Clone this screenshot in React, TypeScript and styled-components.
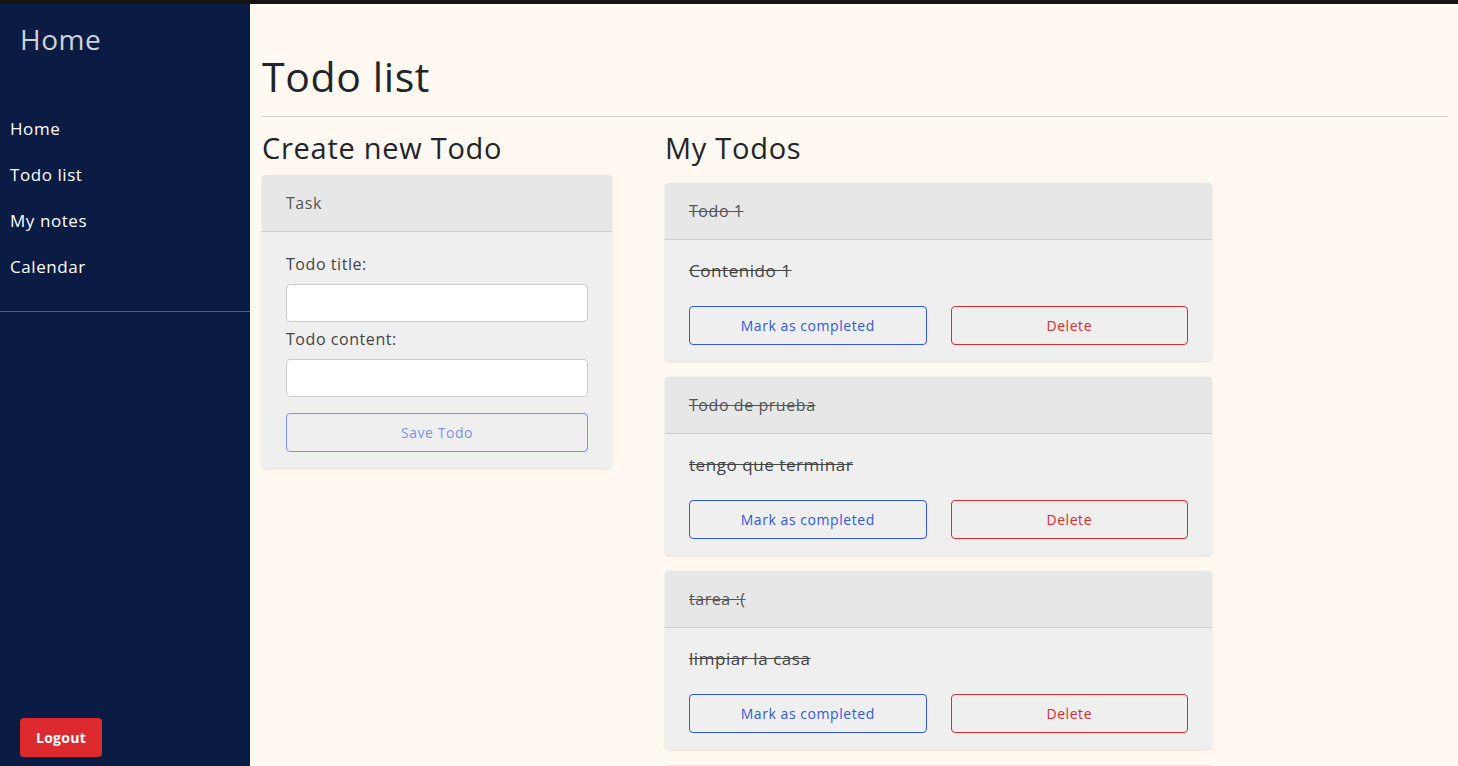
import React from "react";
import styled, { createGlobalStyle } from "styled-components";

const GlobalStyle = createGlobalStyle`
  html, body { margin: 0; padding: 0; }
  body {
    background: #fff9f1;
    font-family: "Open Sans", "Noto Sans", "Liberation Sans", sans-serif;
    color: #212529;
    letter-spacing: 0.035em;
  }
  * { box-sizing: border-box; }
`;

const Page = styled.div`
  display: flex;
  height: 766px;
  border-top: 4px solid #171310;
  overflow: hidden;
`;

const Sidebar = styled.aside`
  width: 250px;
  flex-shrink: 0;
  background: #0a1c43;
  display: flex;
  flex-direction: column;
`;

const Brand = styled.div`
  padding: 17px 20px 0;
  font-size: 28px;
  line-height: 36px;
  color: #cdd1da;
  height: 102px;
  letter-spacing: 0.02em;
`;

const Nav = styled.nav`
  display: flex;
  flex-direction: column;
  padding-bottom: 21px;
  border-bottom: 1px solid #4b6382;
`;

const NavItem = styled.a`
  display: block;
  padding: 10px 10px;
  height: 46px;
  font-size: 17px;
  line-height: 26px;
  color: #ffffff;
  text-decoration: none;
`;

const SidebarSpacer = styled.div`
  flex: 1;
`;

const LogoutButton = styled.button`
  align-self: flex-start;
  margin: 0 0 9px 20px;
  width: 82px;
  height: 39px;
  border: none;
  border-radius: 4px;
  background: #dc2a2f;
  color: #fff;
  font-family: inherit;
  font-weight: 700;
  font-size: 14px;
  letter-spacing: 0.02em;
`;

const Main = styled.main`
  flex: 1;
  padding: 0 10px 0 12px;
`;

const Title = styled.h1`
  margin: 48px 0 0;
  font-size: 41px;
  font-weight: 400;
  line-height: 48px;
  padding-bottom: 16px;
  border-bottom: 1px solid #cfcfcf;
  letter-spacing: 0.015em;
`;

const Columns = styled.div`
  display: flex;
  gap: 53px;
  padding-top: 14px;
`;

const Column = styled.section<{ $width: number }>`
  width: ${(p) => p.$width}px;
  display: flex;
  flex-direction: column;
`;

const SectionTitle = styled.h2<{ $gap: number }>`
  margin: 0 0 ${(p) => p.$gap}px;
  font-size: 29px;
  font-weight: 400;
  line-height: 34px;
  letter-spacing: 0.025em;
`;

const Card = styled.div`
  background: #efefef;
  border-radius: 4px;
  box-shadow: 0 1px 3px rgba(0, 0, 0, 0.12);
  overflow: hidden;
  margin-bottom: 16px;
`;

const CardHeader = styled.div<{ $strike?: boolean }>`
  height: 57px;
  padding: 0 24px;
  display: flex;
  align-items: center;
  background: #e7e7e7;
  border-bottom: 1px solid #cbcbcb;
  font-size: 16px;
  color: #555;
  text-decoration: ${(p) => (p.$strike ? "line-through" : "none")};
`;

const CardBody = styled.div<{ $top: number }>`
  padding: ${(p) => p.$top}px 24px 16px;
  display: flex;
  flex-direction: column;
`;

const Label = styled.label`
  font-size: 16px;
  line-height: 24px;
  color: #444;
  margin-bottom: 8px;
`;

const Input = styled.input`
  height: 38px;
  border: 1px solid #ccc;
  border-radius: 4px;
  background: #fff;
  margin-bottom: 5px;
`;

const OutlineButton = styled.button<{ $color: string }>`
  height: 39px;
  border: 1px solid ${(p) => p.$color};
  border-radius: 4px;
  background: transparent;
  color: ${(p) => p.$color};
  font-family: inherit;
  font-size: 14px;
  letter-spacing: 0.04em;
`;

const SaveButton = styled(OutlineButton)`
  margin-top: 11px;
`;

const Content = styled.p`
  margin: 6px 0 22px;
  font-size: 17px;
  line-height: 26px;
  color: #444;
  text-decoration: line-through;
`;

const ButtonRow = styled.div`
  display: grid;
  grid-template-columns: 1fr 1fr;
  gap: 24px;
`;

const todos = [
  { title: "Todo 1", content: "Contenido 1" },
  { title: "Todo de prueba", content: "tengo que terminar" },
  { title: "tarea :(", content: "limpiar la casa" },
  { title: "Otra tarea", content: "..." },
];

export default function App() {
  return (
    <>
      <GlobalStyle />
      <Page>
        <Sidebar>
          <Brand>Home</Brand>
          <Nav>
            <NavItem href="#">Home</NavItem>
            <NavItem href="#">Todo list</NavItem>
            <NavItem href="#">My notes</NavItem>
            <NavItem href="#">Calendar</NavItem>
          </Nav>
          <SidebarSpacer />
          <LogoutButton>Logout</LogoutButton>
        </Sidebar>
        <Main>
          <Title>Todo list</Title>
          <Columns>
            <Column $width={350}>
              <SectionTitle $gap={10}>Create new Todo</SectionTitle>
              <Card>
                <CardHeader>Task</CardHeader>
                <CardBody $top={20}>
                  <Label>Todo title:</Label>
                  <Input />
                  <Label>Todo content:</Label>
                  <Input />
                  <SaveButton $color="#7b92f2">Save Todo</SaveButton>
                </CardBody>
              </Card>
            </Column>
            <Column $width={547}>
              <SectionTitle $gap={18}>My Todos</SectionTitle>
              {todos.map((t) => (
                <Card key={t.title}>
                  <CardHeader $strike>{t.title}</CardHeader>
                  <CardBody $top={12}>
                    <Content>{t.content}</Content>
                    <ButtonRow>
                      <OutlineButton $color="#3457e0">Mark as completed</OutlineButton>
                      <OutlineButton $color="#dc2a2f">Delete</OutlineButton>
                    </ButtonRow>
                  </CardBody>
                </Card>
              ))}
            </Column>
          </Columns>
        </Main>
      </Page>
    </>
  );
}
